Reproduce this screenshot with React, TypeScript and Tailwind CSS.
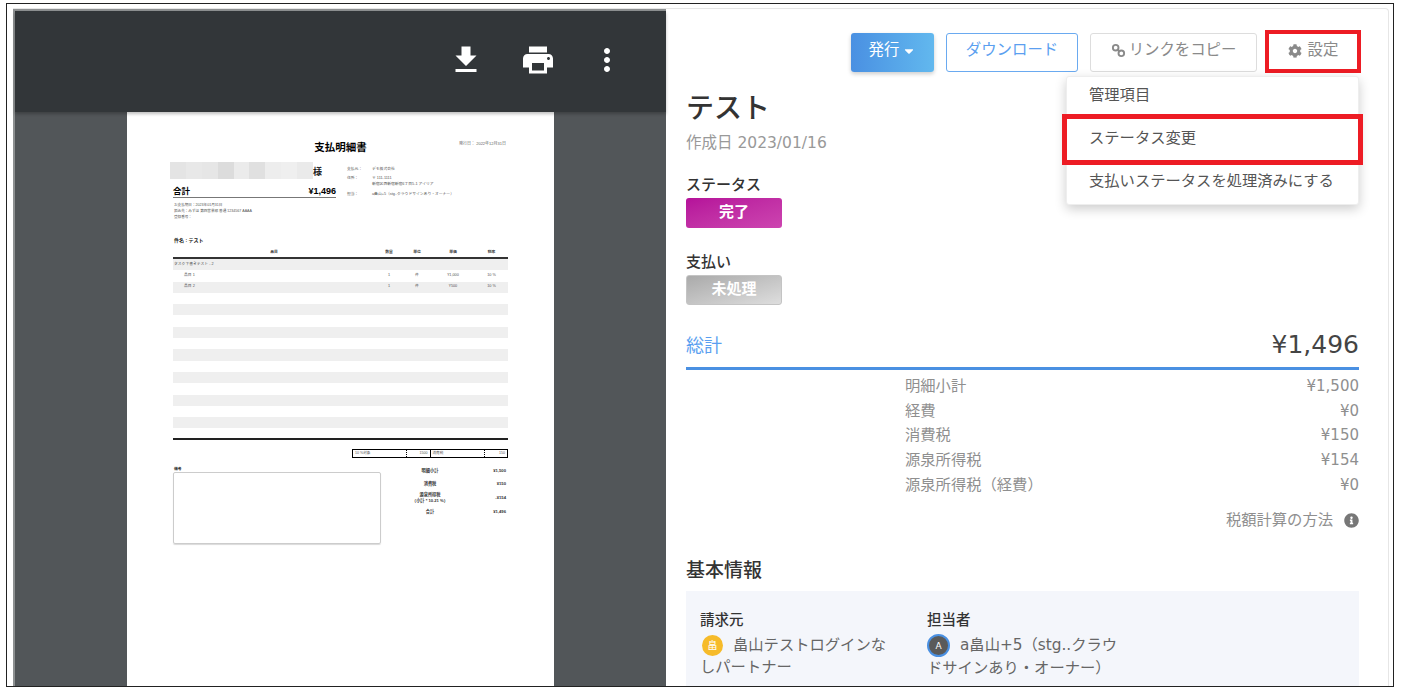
import React from "react";
import { FaCaretDown, FaCog, FaInfoCircle } from "react-icons/fa";

const rowLabels = [
  ["明細小計", "¥1,500"],
  ["経費", "¥0"],
  ["消費税", "¥150"],
  ["源泉所得税", "¥154"],
  ["源泉所得税（経費）", "¥0"],
];

const docRows = [
  ["タスク下書きテスト - 2", "", "", "", ""],
  ["品目 1", "1", "件", "¥1,000", "10 %"],
  ["品目 2", "1", "件", "¥500", "10 %"],
  ...Array.from({ length: 12 }, () => ["", "", "", "", ""]),
];

const blurShades = ["#e4e4e4", "#e8e8e8", "#e6e6e6", "#dcdcdc", "#ebebeb", "#e0e0e0", "#ededed", "#efefef", "#eaeaea"];

function LinkIcon() {
  return (
    <svg viewBox="0 0 16 16" className="w-[15px] h-[15px]" fill="none" stroke="#8a8a8a" strokeWidth="2">
      <circle cx="5" cy="5" r="3" />
      <circle cx="11" cy="11" r="3" />
      <path d="M6.5 6.5l3 3" />
    </svg>
  );
}

function DocPage() {
  return (
    <div className="w-[427px] h-full mx-auto bg-white px-[46px] font-['Liberation_Sans','Noto_Sans_CJK_JP',sans-serif] text-[#333]">
      <div className="grid grid-cols-[1fr_auto_1fr] pt-[28px]">
        <div />
        <div className="text-[10.5px] leading-[14px] font-bold text-black">支払明細書</div>
        <div className="text-right pr-[2px] pt-[1px] text-[4px] leading-[5px] text-[#666]">発行日： 2022年12月31日</div>
      </div>

      <div className="flex mt-[8px]">
        <div className="w-[163px]">
          <div className="flex items-center h-[17px] -ml-[3px]">
            <div className="flex w-[143px] h-[17px]">
              {blurShades.map((c, i) => (
                <div key={i} className="flex-1" style={{ backgroundColor: c }} />
              ))}
            </div>
            <div className="text-[9px] leading-[12px] font-bold text-[#222] pt-[2px]">様</div>
          </div>
          <div className="flex justify-between items-end h-[19px] border-b border-[#777] font-bold text-black">
            <span className="text-[8.5px] leading-[12px]">合計</span>
            <span className="text-[9px] leading-[12px]">¥1,496</span>
          </div>
          <div className="mt-[4px] text-[3.6px] leading-[6px] text-[#555] pl-[1px]">
            <div>お支払期日：2023年01月31日</div>
            <div>振込先：みずほ 第四営業部 普通 1234567 AAAA</div>
            <div>登録番号：</div>
          </div>
        </div>
        <div className="ml-[11px] pt-[4px] text-[3.8px] leading-[6px] text-[#555]">
          <div className="flex">
            <span className="w-[25px]">支払元：</span>
            <span>デモ株式会社</span>
          </div>
          <div className="flex mt-[3px]">
            <span className="w-[25px]">住所：</span>
            <span>
              〒 111-1111
              <br />
              新宿区西新宿新宿6丁目5-1 アイリア
            </span>
          </div>
          <div className="flex mt-[4px]">
            <span className="w-[25px]">担当：</span>
            <span>a畠山+5（stg..クラウドサインあり・オーナー）</span>
          </div>
        </div>
      </div>

      <div className="mt-[17px] text-[5px] leading-[7px] font-bold text-[#222] pl-[1px]">件名 : テスト</div>

      <div className="grid grid-cols-[202px_28px_28px_44px_33px] text-center text-[3.8px] leading-[6px] font-bold text-[#444] mt-[5px] pb-[2px] border-b-2 border-[#333]">
        <div>品目</div>
        <div>数量</div>
        <div>単位</div>
        <div>単価</div>
        <div>税率</div>
      </div>
      {docRows.map((r, i) => (
        <div
          key={i}
          className={`grid grid-cols-[202px_28px_28px_44px_33px] h-[11.3px] items-center text-center text-[3.8px] text-[#555] ${i % 2 === 0 ? "bg-[#efefef]" : "bg-white"}`}
        >
          <div className={`text-left ${i === 0 ? "pl-[1px]" : "pl-[11px]"}`}>{r[0]}</div>
          <div>{r[1]}</div>
          <div>{r[2]}</div>
          <div>{r[3]}</div>
          <div>{r[4]}</div>
        </div>
      ))}

      <div className="mt-[10px] h-[2px] bg-[#222]" />

      <div className="flex justify-end mt-[9px]">
        <div className="flex w-[156px] h-[9px] border border-black text-[3.6px] leading-[7px] text-[#555]">
          <div className="flex-1 flex justify-between px-[2px] border-r border-black">
            <span className="w-[52px] border-r border-dotted border-black">10 %対象</span>
            <span>1500</span>
          </div>
          <div className="flex-1 flex justify-between px-[2px]">
            <span className="w-[52px] border-r border-dotted border-black">消費税</span>
            <span>150</span>
          </div>
        </div>
      </div>

      <div className="flex mt-[8px]">
        <div className="w-[208px]">
          <div className="text-[3.8px] leading-[6px] font-bold text-[#333] pl-[1px]">備考</div>
          <div className="w-[208px] h-[72px] rounded-[2px] border border-[#ccc] shadow-[0_1px_1px_rgba(0,0,0,0.15)]" />
        </div>
        <div className="flex-1 -mt-[2px] text-[4.2px] font-bold text-[#333]">
          <div className="grid grid-cols-[1fr_36px] items-center text-center h-[13px]">
            <div className="pl-[7px]">明細小計</div>
            <div className="text-right pr-[2px]">¥1,500</div>
          </div>
          <div className="grid grid-cols-[1fr_36px] items-center text-center h-[13px]">
            <div className="pl-[7px]">消費税</div>
            <div className="text-right pr-[2px]">¥150</div>
          </div>
          <div className="grid grid-cols-[1fr_36px] items-center text-center h-[15px] leading-[6px]">
            <div className="pl-[7px]">
              源泉所得税
              <br />
              （小計 * 10.21 %）
            </div>
            <div className="text-right pr-[2px]">-¥154</div>
          </div>
          <div className="grid grid-cols-[1fr_36px] items-center text-center h-[14px]">
            <div className="pl-[7px]">合計</div>
            <div className="text-right pr-[2px]">¥1,496</div>
          </div>
        </div>
      </div>
    </div>
  );
}

function PdfPanel() {
  return (
    <div className="w-[653px] shrink-0 flex flex-col bg-[#525659] border-l-2 border-t-2 border-[#8d9091] min-h-0">
      <div className="h-[101px] shrink-0 bg-[#323639] flex justify-end items-start pt-[31px] pr-[41px] gap-[33px] shadow-[0_2px_3px_rgba(0,0,0,0.25)] relative">
        <svg viewBox="0 0 24 24" className="w-[36px] h-[36px] mr-[3px]" fill="#fff">
          <path d="M19 9h-4V3H9v6H5l7 7 7-7zM5 18v2h14v-2H5z" />
        </svg>
        <svg viewBox="0 0 24 24" className="w-[36px] h-[36px]" fill="#fff">
          <path d="M19 8H5c-1.66 0-3 1.34-3 3v6h4v4h12v-4h4v-6c0-1.66-1.34-3-3-3zm-3 11H8v-5h8v5zm3-7c-.55 0-1-.45-1-1s.45-1 1-1 1 .45 1 1-.45 1-1 1zm-1-9H6v4h12V3z" />
        </svg>
        <svg viewBox="0 0 24 24" className="w-[36px] h-[36px]" fill="#fff">
          <path d="M12 8c1.1 0 2-.9 2-2s-.9-2-2-2-2 .9-2 2 .9 2 2 2zm0 2c-1.1 0-2 .9-2 2s.9 2 2 2 2-.9 2-2-.9-2-2-2zm0 6c-1.1 0-2 .9-2 2s.9 2 2 2 2-.9 2-2-.9-2-2-2z" />
        </svg>
      </div>
      <div className="flex-1 min-h-0 overflow-hidden">
        <DocPage />
      </div>
    </div>
  );
}

function Actions() {
  return (
    <div className="relative flex justify-end items-center gap-[12px] pr-[2px] text-[15.4px]">
      <button className="w-[83px] h-[39px] pb-[4px] rounded-[3px] bg-gradient-to-r from-[#4a90e2] to-[#62b8ee] text-white flex items-center justify-center gap-[3px] shadow-[0_2px_4px_rgba(0,0,0,0.2)]">
        発行
        <FaCaretDown className="w-[14px] h-[14px]" />
      </button>
      <button className="w-[132px] h-[39px] pb-[4px] rounded-[3px] bg-white border border-[#6aaaf0] text-[#5b9ff0]">ダウンロード</button>
      <button className="w-[167px] h-[39px] pb-[4px] rounded-[3px] bg-white border border-[#ddd] text-[#8a8a8a] flex items-center justify-center gap-[3px]">
        <LinkIcon />
        リンクをコピー
      </button>
      <div className="relative w-[88px] h-[39px]">
        <button className="w-full h-full pb-[4px] bg-white text-[#8a8a8a] flex items-center justify-center gap-[6px]">
          <FaCog className="w-[14px] h-[14px]" />
          設定
        </button>
        <div className="absolute -left-[4px] -right-[4px] -top-[3px] -bottom-[1px] border-[4px] border-[#ed1c24]" />
      </div>

      <div className="absolute right-0 top-[43px] w-[293px] h-[129px] bg-white rounded-[3px] border border-[#eee] shadow-[0_4px_12px_rgba(0,0,0,0.2)] text-[15.3px] text-[#555] z-10">
        <div className="h-[43px] flex items-center pl-[22px] pb-[6px]">管理項目</div>
        <div className="relative h-[43px] flex items-center pl-[22px] pb-[6px]">
          ステータス変更
          <div className="absolute -left-[5px] -right-[5px] -top-[6px] -bottom-[2px] border-[5px] border-[#ed1c24]" />
        </div>
        <div className="h-[43px] flex items-center pl-[22px] pb-[6px]">支払いステータスを処理済みにする</div>
      </div>
    </div>
  );
}

function DetailPanel() {
  return (
    <div className="flex-1 min-w-0 pl-[20px] pr-[29px] pt-[24px] overflow-hidden text-[#555] font-['DejaVu_Sans','Noto_Sans_CJK_JP',sans-serif]">
      <Actions />

      <h1 className="mt-[16px] text-[28px] leading-[42px] font-medium text-[#333]">テスト</h1>
      <div className="mt-[2px] text-[15.5px] leading-[22px] text-[#999]">作成日 2023/01/16</div>

      <div className="mt-[20px] text-[15px] leading-[22px] font-medium text-[#333]">ステータス</div>
      <div className="w-[96px] h-[30px] mt-[2px] rounded-[3px] bg-gradient-to-br from-[#b5109a] to-[#cd44b0] text-white text-[15px] font-bold flex items-center justify-center pb-[2px]">完了</div>

      <div className="mt-[23px] text-[15px] leading-[22px] font-medium text-[#333]">支払い</div>
      <div className="w-[96px] h-[30px] mt-[2px] rounded-[3px] border border-[#c4c4c4] bg-gradient-to-br from-[#aaaaaa] to-[#dedede] text-white text-[15px] font-bold flex items-center justify-center pb-[2px]">未処理</div>

      <div className="mt-[18px] h-[47px] flex justify-between items-center border-b-[3px] border-[#4a90e2]">
        <span className="text-[18px] text-[#5b9ff0]">総計</span>
        <span className="text-[25px] text-[#444]">¥1,496</span>
      </div>

      <div className="mt-[4px] text-[15.3px] text-[#8f8f8f]">
        {rowLabels.map(([label, value]) => (
          <div key={label} className="flex justify-between h-[24.7px] items-center pl-[219px]">
            <span>{label}</span>
            <span className="text-[15px]">{value}</span>
          </div>
        ))}
      </div>

      <div className="mt-[12px] flex justify-end items-center gap-[11px] text-[15.3px] leading-[22px] text-[#8f8f8f]">
        税額計算の方法
        <FaInfoCircle className="w-[15px] h-[15px] text-[#777]" />
      </div>

      <h2 className="mt-[25px] text-[19px] leading-[28px] font-medium text-[#333]">基本情報</h2>

      <div className="mt-[7px] bg-[#f4f6fb] px-[14px] pt-[18px] pb-[20px] flex text-[15.3px] leading-[22px]">
        <div className="w-[227px] shrink-0 pr-[38px]">
          <div className="font-medium text-[#333] text-[14.5px] mb-[3px]">請求元</div>
          <div className="text-[#666]">
            <span className="inline-flex align-middle items-center justify-center w-[21px] h-[21px] ml-[2px] rounded-full bg-[#f6bb2a] text-white text-[10px] mr-[10px]">畠</span>
            <span>畠山テストログインなしパートナー</span>
          </div>
        </div>
        <div className="w-[195px] shrink-0">
          <div className="font-medium text-[#333] text-[14.5px] mb-[3px]">担当者</div>
          <div className="text-[#666]">
            <span className="inline-flex align-middle items-center justify-center w-[23px] h-[23px] rounded-full bg-[#5a5a5a] border-2 border-[#4a90e2] text-white text-[9px] mr-[10px]">A</span>
            <span>a畠山+5（stg..クラウドサインあり・オーナー）</span>
          </div>
        </div>
      </div>
    </div>
  );
}

export default function App() {
  return (
    <div className="w-[1407px] h-[695px] bg-white pt-[3px] pl-[6px] overflow-hidden">
      <div className="w-[1388px] h-[684px] border-[1.5px] border-[#222] pl-[6px] pt-[4px] pr-[4px] overflow-hidden">
        <div className="flex h-[calc(100%+10px)] border-t border-r border-[#e6e6e6] rounded-tr-[4px]">
          <PdfPanel />
          <DetailPanel />
        </div>
      </div>
    </div>
  );
}
